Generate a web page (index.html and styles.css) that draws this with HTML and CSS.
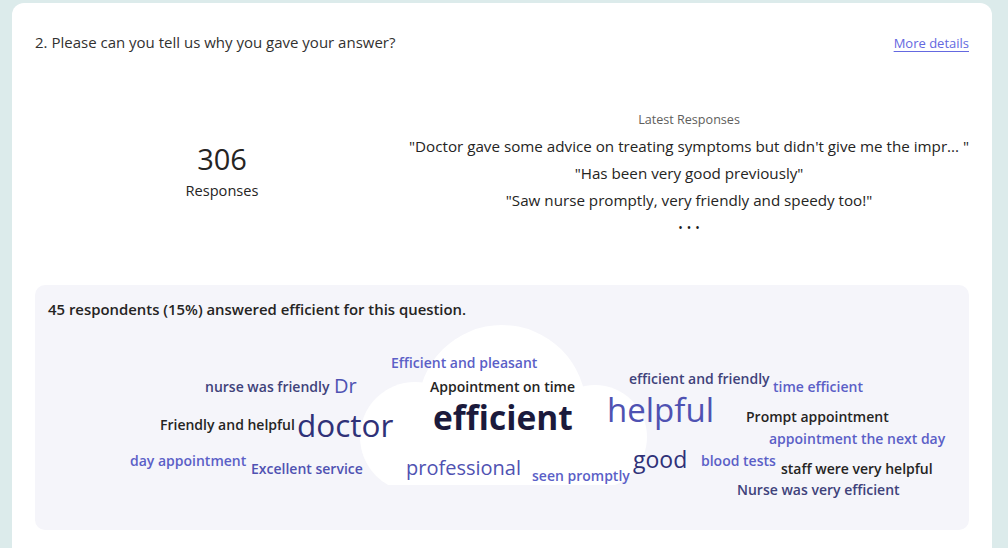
FILE: index.html
```html
<!DOCTYPE html>
<html lang="en">
<head>
<meta charset="utf-8">
<title>Question 2</title>
<link rel="stylesheet" href="styles.css">
</head>
<body>
<div class="card">
  <div class="card-head">
    <div class="question">2. Please can you tell us why you gave your answer?</div>
    <a class="more" href="#">More details</a>
  </div>
  <div class="summary">
    <div class="count">
      <div class="count-num">306</div>
      <div class="count-label">Responses</div>
    </div>
    <div class="latest">
      <div class="latest-title">Latest Responses</div>
      <div class="quote q1">"Doctor gave some advice on treating symptoms but didn't give me the impr... "</div>
      <div class="quote">"Has been very good previously"</div>
      <div class="quote">"Saw nurse promptly, very friendly and speedy too!"</div>
      <div class="dots">•••</div>
    </div>
  </div>
  <div class="panel">
    <div class="panel-head">45 respondents (15%) answered efficient for this question.</div>
    <div class="cloud">
      <svg class="cloud-bg" width="934" height="211" viewBox="0 0 934 211">
        <defs><clipPath id="cb"><rect x="0" y="0" width="934" height="166"/></clipPath></defs>
        <g fill="#ffffff" clip-path="url(#cb)">
          <circle cx="467" cy="90" r="84"/>
          <circle cx="380" cy="118" r="55"/>
          <circle cx="560" cy="118" r="52"/>
          <rect x="380" y="90" width="180" height="90"/>
        </g>
      </svg>
      <span class="w s14 c-blue" style="left:356px;top:36px">Efficient and pleasant</span>
      <span class="w s14 c-ind" style="left:170px;top:60px">nurse was friendly</span>
      <span class="w s20 c-mid" style="left:299px;top:55px">Dr</span>
      <span class="w s14 c-dark" style="left:395px;top:60px">Appointment on time</span>
      <span class="w s14 c-ind" style="left:594px;top:52px">efficient and friendly</span>
      <span class="w s14 c-blue" style="left:738px;top:60px">time efficient</span>
      <span class="w s14 c-dark" style="left:125px;top:98px">Friendly and helpful</span>
      <span class="w s30 c-navy" style="left:262px;top:87px">doctor</span>
      <span class="w s33 c-deep bold" style="left:398px;top:78px">efficient</span>
      <span class="w s32 c-mid" style="left:572px;top:71px">helpful</span>
      <span class="w s14 c-dark" style="left:711px;top:90px">Prompt appointment</span>
      <span class="w s14 c-blue" style="left:734px;top:112px">appointment the next day</span>
      <span class="w s14 c-blue" style="left:95px;top:134px">day appointment</span>
      <span class="w s14 c-mid" style="left:216px;top:142px">Excellent service</span>
      <span class="w s20 c-mid" style="left:371px;top:137px">professional</span>
      <span class="w s14 c-blue" style="left:497px;top:149px">seen promptly</span>
      <span class="w s22 c-navy" style="left:598px;top:127px">good</span>
      <span class="w s14 c-blue" style="left:666px;top:134px">blood tests</span>
      <span class="w s14 c-dark" style="left:746px;top:142px">staff were very helpful</span>
      <span class="w s14 c-ind" style="left:702px;top:163px">Nurse was very efficient</span>
    </div>
  </div>
</div>
</body>
</html>
```

FILE: styles.css
```css
* { box-sizing: border-box; }
html, body { margin: 0; padding: 0; }
body {
  background: #dcebeb;
  font-family: "Open Sans", "Noto Sans", sans-serif;
  color: #252423;
  width: 1008px;
  height: 548px;
  overflow: hidden;
}
.card {
  margin: 3px 16px 0 12px;
  background: #ffffff;
  border-radius: 12px 12px 0 0;
  padding: 30px 23px 40px 23px;
  min-height: 600px;
}
.card-head {
  display: flex;
  justify-content: space-between;
  align-items: center;
  height: 20px;
}
.question {
  font-size: 15px;
  line-height: 20px;
  color: #323130;
  margin-top: -2px;
}
.more {
  font-size: 13px;
  line-height: 20px;
  color: #6468e0;
  text-decoration: underline;
  text-underline-offset: 3px;
  margin-top: -1px;
}
.summary {
  display: grid;
  grid-template-columns: 374px 1fr;
  margin-top: 57px;
  height: 130px;
}
.count {
  display: flex;
  flex-direction: column;
  align-items: center;
  padding-top: 31px;
}
.count-num {
  font-size: 29px;
  font-weight: 400;
  line-height: 36px;
  color: #252423;
}
.count-label {
  font-size: 14.6px;
  line-height: 20px;
  margin-top: 3px;
  color: #252423;
}
.latest {
  display: flex;
  flex-direction: column;
  align-items: center;
  text-align: center;
}
.latest-title {
  font-size: 12.6px;
  line-height: 18px;
  color: #605e5c;
  margin-bottom: 4px;
  margin-top: 1px;
}
.quote {
  font-size: 15.2px;
  line-height: 27px;
  color: #252423;
  white-space: nowrap;
}
.dots {
  font-size: 12px;
  line-height: 27px;
  letter-spacing: 4px;
  color: #1b1a19;
  padding-left: 4px;
}
.panel {
  margin-top: 45px;
  background: #f5f5fa;
  border-radius: 10px;
  padding: 14px 13px 0 13px;
  height: 245px;
}
.panel-head {
  font-size: 14.9px;
  line-height: 20px;
  font-weight: 600;
  color: #252423;
}
.cloud {
  position: relative;
  height: 211px;
  margin: 0 -13px;
}
.cloud-bg {
  position: absolute;
  left: 0;
  top: 0;
}
.w {
  position: absolute;
  white-space: nowrap;
  font-weight: 600;
  line-height: 1.2;
}
.bold { font-weight: 700; }
.s14 { font-size: 14px; }
.s20 { font-size: 20px; font-weight: 500; }
.s22 { font-size: 23px; font-weight: 500; }
.s30 { font-size: 31.5px; font-weight: 500; }
.s32 { font-size: 33px; }
.s33 { font-size: 33.5px; }
.s32.c-mid { font-weight: 500; }
.c-blue { color: #5b5fc7; }
.c-mid { color: #4f52b2; }
.c-ind { color: #40427a; }
.c-navy { color: #2f3178; }
.c-dark { color: #252423; }
.c-deep { color: #1b1a3c; }
```
